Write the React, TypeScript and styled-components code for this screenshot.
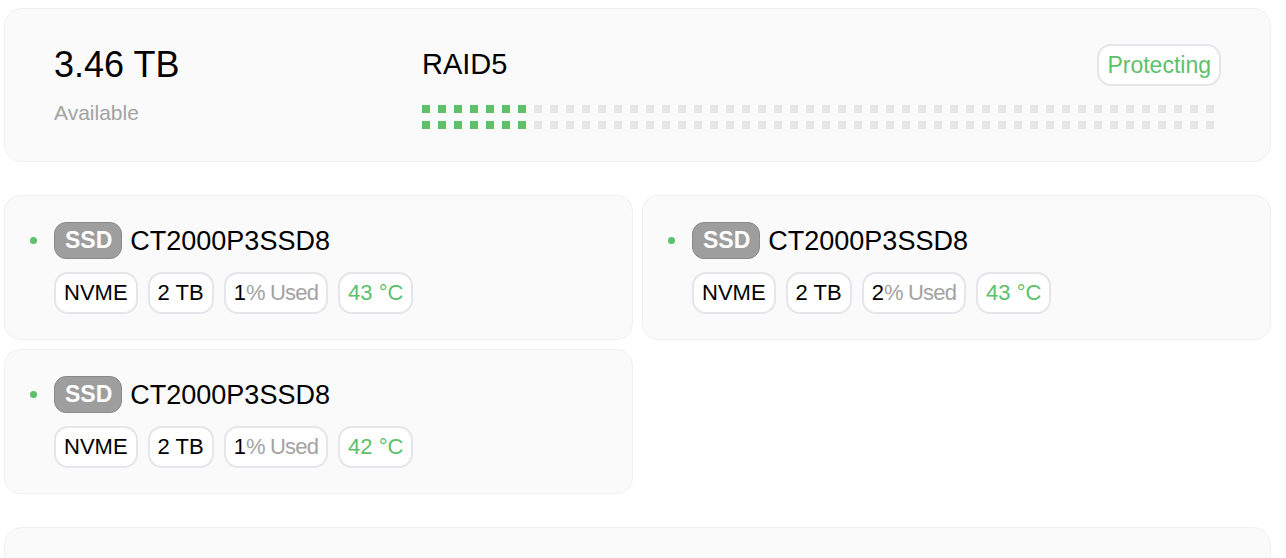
import React from 'react';
import styled, { createGlobalStyle } from 'styled-components';

const COLORS = {
  green: '#5cc16a',
  cardBg: '#fafafa',
  cardBorder: '#f0f0f0',
  grey: '#a3a3a3',
  dotOff: '#e6e6e6',
  tagBorder: '#e5e5ea',
  badgeBg: '#9e9e9e',
  badgeBorder: '#8a8a8a',
};

interface Disk {
  model: string;
  bus: string;
  size: string;
  used: number;
  temp: number;
}

interface Pool {
  available: string;
  level: string;
  status: string;
  usedCells: number;
  disks: Disk[];
}

const pool: Pool = {
  available: '3.46 TB',
  level: 'RAID5',
  status: 'Protecting',
  usedCells: 7,
  disks: [
    { model: 'CT2000P3SSD8', bus: 'NVME', size: '2 TB', used: 1, temp: 43 },
    { model: 'CT2000P3SSD8', bus: 'NVME', size: '2 TB', used: 2, temp: 43 },
    { model: 'CT2000P3SSD8', bus: 'NVME', size: '2 TB', used: 1, temp: 42 },
  ],
};

const CELLS_PER_ROW = 50;

const GlobalStyle = createGlobalStyle`
  body {
    margin: 0;
    background: #ffffff;
    font-family: "Liberation Sans", Arial, Helvetica, sans-serif;
    color: #000000;
  }
`;

const Page = styled.main`
  display: flex;
  flex-direction: column;
  gap: 33px;
  padding: 8px 15px 0 4px;
`;

const PoolCard = styled.div`
  display: flex;
  padding: 35px 49px 32px 49px;
  background-color: ${COLORS.cardBg};
  border: 1px solid ${COLORS.cardBorder};
  border-radius: 18px;
`;

const PendingCard = styled.div`
  height: 152px;
  background-color: ${COLORS.cardBg};
  border: 1px solid ${COLORS.cardBorder};
  border-radius: 18px;
`;

const Capacity = styled.div`
  width: 368px;
  display: flex;
  flex-direction: column;
`;

const CapacityValue = styled.div`
  font-size: 36px;
  line-height: 42px;
`;

const CapacityLabel = styled.div`
  margin-top: 15px;
  font-size: 21px;
  line-height: 24px;
  color: ${COLORS.grey};
`;

const Layout = styled.div`
  flex: 1;
  display: flex;
  flex-direction: column;
`;

const LayoutHeader = styled.div`
  display: flex;
  justify-content: space-between;
  align-items: flex-start;
`;

const LevelName = styled.div`
  font-size: 29px;
  line-height: 40px;
`;

const StatusBadge = styled.div`
  height: 42px;
  box-sizing: border-box;
  padding: 0 8px;
  border: 2px solid ${COLORS.tagBorder};
  border-radius: 14px;
  background-color: #ffffff;
  color: ${COLORS.green};
  font-size: 23px;
  line-height: 38px;
`;

const CellGrid = styled.div`
  margin-top: 19px;
  display: grid;
  grid-template-columns: repeat(${CELLS_PER_ROW}, 8px);
  grid-auto-rows: 8px;
  gap: 8px;
`;

const Cell = styled.span<{ $on: boolean }>`
  display: block;
  background-color: ${({ $on }) => ($on ? COLORS.green : COLORS.dotOff)};
`;

const DiskGrid = styled.div`
  display: grid;
  grid-template-columns: 1fr 1fr;
  gap: 9px;
`;

const DiskCard = styled.div`
  display: flex;
  align-items: flex-start;
  padding: 26px 24px 25px 25px;
  background-color: ${COLORS.cardBg};
  border: 1px solid ${COLORS.cardBorder};
  border-radius: 16px;
`;

const Bullet = styled.span`
  flex: none;
  width: 7px;
  height: 7px;
  margin: 15px 17px 0 0;
  border-radius: 50%;
  background-color: ${COLORS.green};
`;

const DiskBody = styled.div`
  display: flex;
  flex-direction: column;
  gap: 13px;
`;

const DiskTitle = styled.div`
  display: flex;
  align-items: center;
  gap: 8px;
`;

const KindBadge = styled.span`
  height: 37px;
  box-sizing: border-box;
  padding: 0 9px 0 10px;
  border: 1px solid ${COLORS.badgeBorder};
  border-radius: 12px;
  background-color: ${COLORS.badgeBg};
  color: #ffffff;
  font-weight: 700;
  font-size: 23px;
  line-height: 35px;
`;

const ModelName = styled.span`
  font-size: 27px;
  line-height: 32px;
`;

const TagRow = styled.div`
  display: flex;
  gap: 10px;
`;

const Tag = styled.span<{ $tone?: 'green' }>`
  height: 42px;
  box-sizing: border-box;
  padding: 0 8px;
  border: 2px solid ${COLORS.tagBorder};
  border-radius: 14px;
  background-color: #ffffff;
  font-size: 22px;
  line-height: 38px;
  color: ${({ $tone }) => ($tone === 'green' ? COLORS.green : '#000000')};
`;

const Muted = styled.span`
  color: ${COLORS.grey};
  letter-spacing: -0.8px;
`;

const PoolSummary = ({ pool }: { pool: Pool }) => {
  const cells = Array.from({ length: CELLS_PER_ROW * 2 }, (_, i) => {
    const col = i % CELLS_PER_ROW;
    return <Cell key={i} $on={col < pool.usedCells} />;
  });

  return (
    <PoolCard>
      <Capacity>
        <CapacityValue>{pool.available}</CapacityValue>
        <CapacityLabel>Available</CapacityLabel>
      </Capacity>
      <Layout>
        <LayoutHeader>
          <LevelName>{pool.level}</LevelName>
          <StatusBadge>{pool.status}</StatusBadge>
        </LayoutHeader>
        <CellGrid>{cells}</CellGrid>
      </Layout>
    </PoolCard>
  );
};

const DiskItem = ({ disk }: { disk: Disk }) => (
  <DiskCard>
    <Bullet />
    <DiskBody>
      <DiskTitle>
        <KindBadge>SSD</KindBadge>
        <ModelName>{disk.model}</ModelName>
      </DiskTitle>
      <TagRow>
        <Tag>{disk.bus}</Tag>
        <Tag>{disk.size}</Tag>
        <Tag>
          {disk.used}
          <Muted>% Used</Muted>
        </Tag>
        <Tag $tone="green">{disk.temp} °C</Tag>
      </TagRow>
    </DiskBody>
  </DiskCard>
);

const App = () => {
  return (
    <>
      <GlobalStyle />
      <Page>
        <PoolSummary pool={pool} />
        <DiskGrid>
          {pool.disks.map((disk, i) => (
            <DiskItem key={i} disk={disk} />
          ))}
        </DiskGrid>
        <PendingCard />
      </Page>
    </>
  );
};

export default App;
